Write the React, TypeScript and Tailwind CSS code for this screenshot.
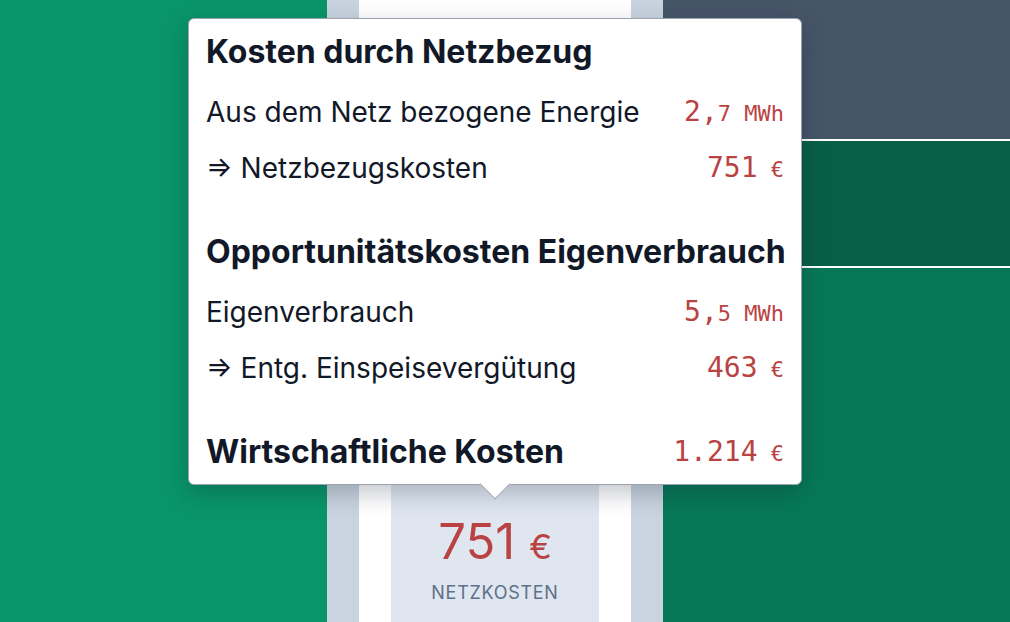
const sans = { fontFamily: "Inter, 'Noto Sans', sans-serif" };

function Value({ main, small }: { main: string; small: string }) {
  return (
    <span className="text-[#b94343] whitespace-pre font-['DejaVu_Sans_Mono',monospace]">
      <span className="text-[28px]">{main}</span>
      <span className="text-[22px]">{small}</span>
    </span>
  );
}

function Row({ label, main, small }: { label: string; main: string; small: string }) {
  return (
    <div className="flex h-[56px] items-center justify-between">
      <span className="text-[28px] text-[#111827]">{label}</span>
      <Value main={main} small={small} />
    </div>
  );
}

export default function App() {
  return (
    <div className="relative flex h-[622px] w-[1010px] overflow-hidden bg-white" style={sans}>
      <div className="w-[327px] bg-[#0a9568]" />
      <div className="flex w-[336px] bg-[#c9d4e0] px-8">
        <div className="flex flex-1 flex-col justify-end bg-white px-8">
          <div className="flex h-[300px] flex-col items-center justify-end bg-[#dfe6f0] pb-[16px]">
            <div className="flex items-baseline gap-[14px] text-[#b94343]">
              <span className="text-[49px] leading-none">751</span>
              <span className="text-[34px] leading-none">€</span>
            </div>
            <div className="mt-[13px] text-[18px] tracking-[0.04em] text-[#5f7089]">NETZKOSTEN</div>
          </div>
        </div>
      </div>
      <div className="flex flex-1 flex-col">
        <div className="h-[139px] bg-[#475569]" />
        <div className="h-[2px] bg-white/90" />
        <div className="h-[125px] bg-[#075f47]" />
        <div className="h-[2px] bg-white/90" />
        <div className="flex-1 bg-[#077857]" />
      </div>

      <div className="absolute left-[188px] top-[18px] w-[614px] rounded-[6px] border border-[#9ca3af] bg-white px-[17px] pt-[15px] pb-[14px] shadow-[0_8px_24px_rgba(15,23,42,0.25)]">
        <div className="h-[36px] whitespace-nowrap text-[32px] font-bold leading-[36px] text-[#111827]">
          Kosten durch Netzbezug
        </div>
        <div className="mt-[14px]">
          <Row label="Aus dem Netz bezogene Energie" main="2," small="7 MWh" />
          <Row label="⇒ Netzbezugskosten" main="751" small=" €" />
        </div>
        <div className="mt-[38px] h-[36px] whitespace-nowrap text-[32px] font-bold leading-[36px] text-[#111827]">
          Opportunitätskosten Eigenverbrauch
        </div>
        <div className="mt-[14px]">
          <Row label="Eigenverbrauch" main="5," small="5 MWh" />
          <Row label="⇒ Entg. Einspeisevergütung" main="463" small=" €" />
        </div>
        <div className="mt-[38px] flex h-[36px] items-center justify-between">
          <span className="whitespace-nowrap text-[32px] font-bold text-[#111827]">Wirtschaftliche Kosten</span>
          <Value main="1.214" small=" €" />
        </div>
        <div className="absolute left-1/2 top-full h-[22px] w-[22px] -translate-x-1/2 -translate-y-[11px] rotate-45 border-r border-b border-[#9ca3af] bg-white" />
      </div>
    </div>
  );
}
